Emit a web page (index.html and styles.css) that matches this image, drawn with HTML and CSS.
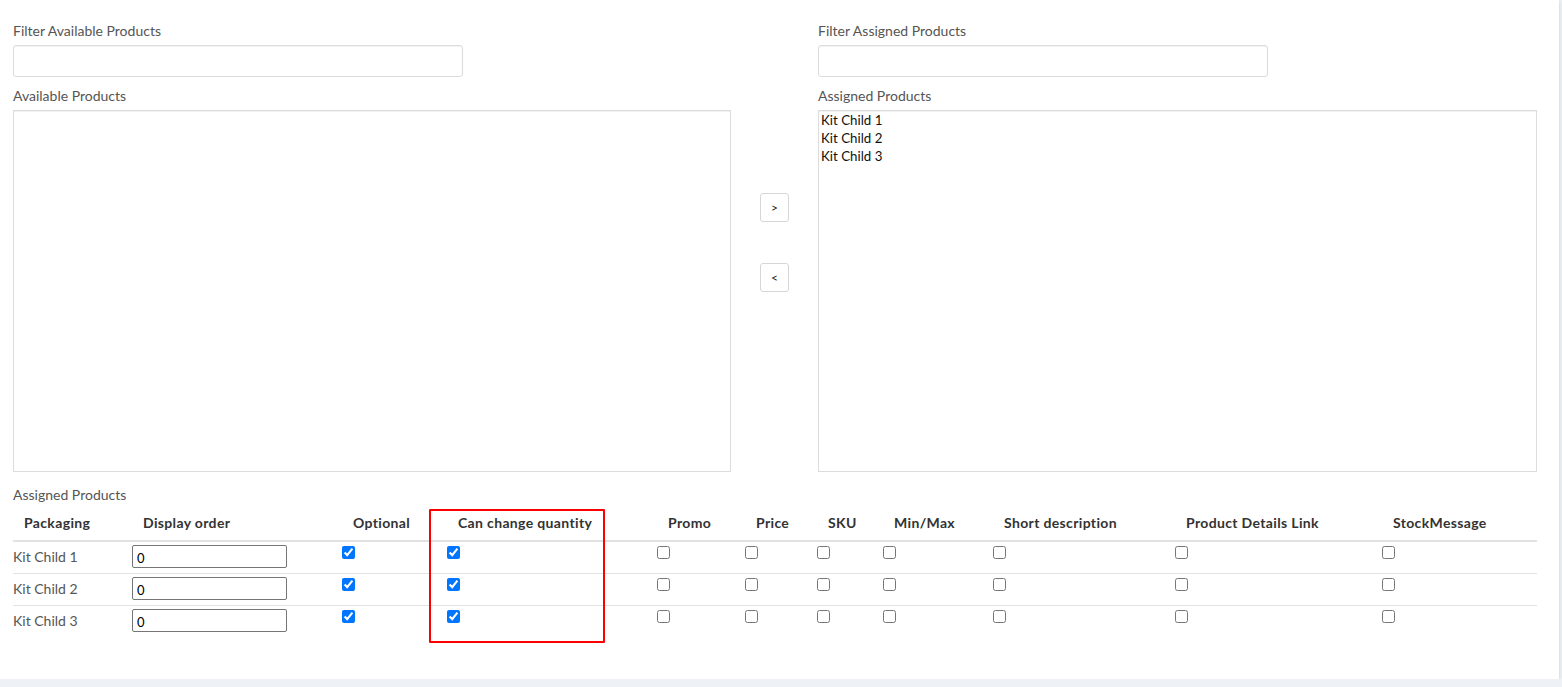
FILE: index.html
```html
<!DOCTYPE html>
<html>
<head>
<meta charset="utf-8">
<link rel="stylesheet" href="styles.css">
</head>
<body>
<div class="card">
  <div class="pickers">
    <div class="pane">
      <label class="lbl">Filter Available Products</label>
      <input class="filter" type="text">
      <label class="lbl lbl-list">Available Products</label>
      <select class="listbox" multiple></select>
    </div>
    <div class="movers">
      <button class="mv">&gt;</button>
      <button class="mv">&lt;</button>
    </div>
    <div class="pane">
      <label class="lbl">Filter Assigned Products</label>
      <input class="filter" type="text">
      <label class="lbl lbl-list">Assigned Products</label>
      <select class="listbox" multiple>
        <option>Kit Child 1</option>
        <option>Kit Child 2</option>
        <option>Kit Child 3</option>
      </select>
    </div>
  </div>
  <div class="lbl lbl-table">Assigned Products</div>
  <table class="grid">
    <colgroup>
      <col style="width:119px"><col style="width:210px"><col style="width:105px"><col style="width:210px">
      <col style="width:88px"><col style="width:72px"><col style="width:66px"><col style="width:110px">
      <col style="width:182px"><col style="width:207px"><col style="width:155px">
    </colgroup>
    <thead>
      <tr>
        <th>Packaging</th><th>Display order</th><th>Optional</th><th>Can change quantity</th>
        <th>Promo</th><th>Price</th><th>SKU</th><th>Min/Max</th><th>Short description</th>
        <th>Product Details Link</th><th>StockMessage</th>
      </tr>
    </thead>
    <tbody>
      <tr>
        <td class="name">Kit Child 1</td><td><input class="order" type="text" value="0"></td>
        <td><input type="checkbox" checked></td><td><input type="checkbox" checked></td>
        <td><input type="checkbox"></td><td><input type="checkbox"></td><td><input type="checkbox"></td>
        <td><input type="checkbox"></td><td><input type="checkbox"></td><td><input type="checkbox"></td>
        <td><input type="checkbox"></td>
      </tr>
      <tr>
        <td class="name">Kit Child 2</td><td><input class="order" type="text" value="0"></td>
        <td><input type="checkbox" checked></td><td><input type="checkbox" checked></td>
        <td><input type="checkbox"></td><td><input type="checkbox"></td><td><input type="checkbox"></td>
        <td><input type="checkbox"></td><td><input type="checkbox"></td><td><input type="checkbox"></td>
        <td><input type="checkbox"></td>
      </tr>
      <tr>
        <td class="name">Kit Child 3</td><td><input class="order" type="text" value="0"></td>
        <td><input type="checkbox" checked></td><td><input type="checkbox" checked></td>
        <td><input type="checkbox"></td><td><input type="checkbox"></td><td><input type="checkbox"></td>
        <td><input type="checkbox"></td><td><input type="checkbox"></td><td><input type="checkbox"></td>
        <td><input type="checkbox"></td>
      </tr>
    </tbody>
  </table>
  <div class="highlight"></div>
</div>
</body>
</html>
```
FILE: styles.css
```css
html, body {
  margin: 0;
  padding: 0;
}
body {
  background: #eef2f6;
  font-family: Lato, "Noto Sans", sans-serif;
  font-size: 14px;
  color: #555;
}
.card {
  position: relative;
  box-sizing: border-box;
  width: 1559px;
  height: 679px;
  background: #fff;
  box-shadow: 0 1px 4px rgba(120, 140, 160, 0.35);
  padding: 21px 22px 0 13px;
}
.pickers {
  display: grid;
  grid-template-columns: 718px 87px 719px;
}
.pane {
  display: flex;
  flex-direction: column;
  align-items: flex-start;
}
.lbl {
  display: block;
  line-height: 20px;
  color: #555;
  margin-bottom: 4px;
}
.lbl-list {
  margin-top: 9px;
}
.filter {
  box-sizing: border-box;
  width: 450px;
  height: 32px;
  margin: 0;
  border: 1px solid #dcdcdc;
  border-radius: 3px;
  box-shadow: inset 0 1px 1px rgba(0, 0, 0, 0.05);
  background: #fff;
}
.listbox {
  box-sizing: border-box;
  width: 100%;
  height: 362px;
  margin: 0;
  padding: 0;
  border: 1px solid #dcdcdc;
  border-radius: 0;
  box-shadow: inset 0 1px 1px rgba(0, 0, 0, 0.06);
  font-family: Lato, "Noto Sans", sans-serif;
  font-size: 13.3px;
  color: #111;
  outline: none;
}
.listbox option {
  padding: 1px 2px 1px;
}
.movers {
  display: flex;
  flex-direction: column;
  align-items: center;
  gap: 41px;
  padding-top: 172px;
}
.mv {
  box-sizing: border-box;
  width: 29px;
  height: 29px;
  padding: 0;
  border: 1px solid #d6d6d6;
  border-radius: 3px;
  background: #fff;
  font-family: Lato, "Noto Sans", sans-serif;
  font-size: 12px;
  color: #222;
}
.lbl-table {
  margin-top: 13px;
  margin-bottom: 0;
}
.grid {
  width: 1524px;
  table-layout: fixed;
  border-collapse: collapse;
}
.grid th {
  text-align: left;
  font-weight: 700;
  color: #333;
  height: 36px;
  padding: 0 0 1px 11px;
  box-sizing: border-box;
  border-bottom: 2px solid #e2e2e2;
  white-space: nowrap;
  letter-spacing: 0.35px;
}
.grid td {
  padding: 3px 0 0 0;
  height: 32px;
  box-sizing: border-box;
  vertical-align: top;
}
.grid tbody tr + tr td {
  border-top: 1px solid #e2e2e2;
}
.grid td.name {
  line-height: 23px;
  color: #555;
}
.order {
  box-sizing: border-box;
  width: 155px;
  height: 23px;
  margin: 0;
  padding: 3px 4px 0;
  border: 1px solid #767676;
  border-radius: 2px;
  font-family: Lato, "Noto Sans", sans-serif;
  font-size: 13px;
  color: #000;
}
.grid input[type="checkbox"] {
  margin: 0;
  width: 13px;
  height: 13px;
}
.highlight {
  position: absolute;
  left: 429px;
  top: 509px;
  width: 172px;
  height: 130px;
  border: 2px solid #ff0000;
  border-radius: 1px;
}
```
